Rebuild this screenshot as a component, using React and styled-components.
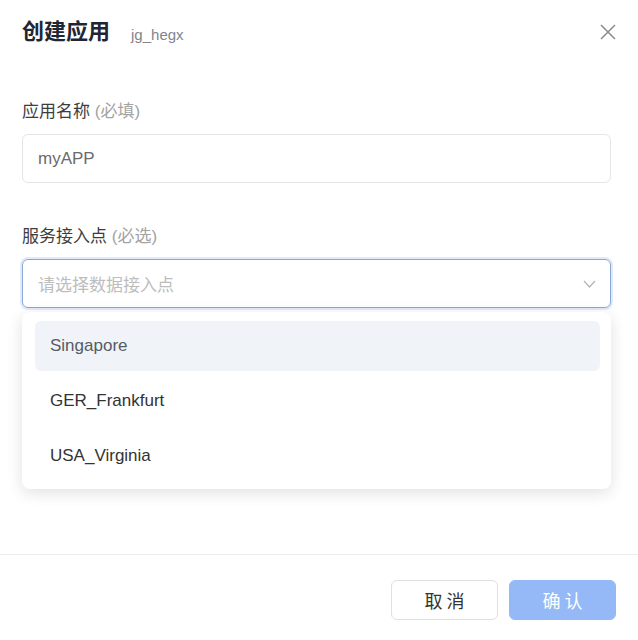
import React from "react";
import styled, { createGlobalStyle } from "styled-components";

const GlobalStyle = createGlobalStyle`
  html, body {
    margin: 0;
    padding: 0;
    background: #ffffff;
  }
  body {
    font-family: "Liberation Sans", "Noto Sans CJK SC", sans-serif;
    color: #333;
  }
`;

const Modal = styled.div`
  height: 640px;
  display: flex;
  flex-direction: column;
  box-sizing: border-box;
`;

const Header = styled.div`
  height: 64px;
  padding: 0 22px;
  display: flex;
  align-items: center;
  box-sizing: border-box;
`;

const Title = styled.h2`
  margin: 0;
  font-size: 22px;
  font-weight: 700;
  color: #1f2633;
  line-height: 1;
`;

const SubTitle = styled.span`
  margin-left: 21px;
  margin-top: 4px;
  font-size: 15px;
  font-weight: 400;
  color: #80858f;
`;

const CloseButton = styled.button`
  margin-left: auto;
  margin-right: -3px;
  width: 22px;
  height: 22px;
  padding: 0;
  border: none;
  background: none;
  display: flex;
  align-items: center;
  justify-content: center;
  cursor: pointer;
`;

const Body = styled.div`
  flex: 1;
  padding: 36px 27px 0 22px;
  display: flex;
  flex-direction: column;
  gap: 42px;
`;

const Field = styled.div`
  display: flex;
  flex-direction: column;
  gap: 10px;
  position: relative;
`;

const Label = styled.label`
  font-size: 17px;
  line-height: 24px;
  color: #3d3d3d;

  & > span {
    color: #a3a3a3;
  }
`;

const Input = styled.div`
  height: 49px;
  box-sizing: border-box;
  border: 1px solid #e3e5e8;
  border-radius: 6px;
  padding: 0 15px;
  display: flex;
  align-items: center;
  font-size: 17px;
  color: #6b6b6b;
`;

const Select = styled(Input)`
  border-color: #8ba6d4;
  box-shadow: 0 0 0 2px #e1eaf8;
  color: #bdbdbd;
  justify-content: space-between;
  padding-right: 14px;
`;

const Dropdown = styled.ul`
  position: absolute;
  top: calc(100% + 4px);
  left: 0;
  right: 0;
  margin: 0;
  padding: 9px 11px 8px 13px;
  list-style: none;
  background: #fff;
  border-radius: 8px;
  box-shadow: 0 4px 16px rgba(0, 0, 0, 0.12);
  display: flex;
  flex-direction: column;
  gap: 5px;
`;

const Option = styled.li`
  height: 50px;
  display: flex;
  align-items: center;
  padding: 0 15px;
  border-radius: 6px;
  font-size: 17px;
  color: ${({ $active }) => ($active ? "#555b66" : "#333")};
  background: ${({ $active }) => ($active ? "#f0f3f8" : "transparent")};
`;

const Footer = styled.div`
  height: 86px;
  border-top: 1px solid #ececec;
  padding: 25px 22px 0;
  box-sizing: border-box;
  display: flex;
  justify-content: flex-end;
  align-items: flex-start;
  gap: 11px;
`;

const Button = styled.button`
  width: 107px;
  height: 40px;
  border-radius: 6px;
  font-family: "Liberation Sans", "Noto Sans CJK SC", sans-serif;
  font-size: 18px;
  letter-spacing: 4px;
  text-indent: 4px;
  cursor: pointer;
  border: 1px solid ${({ $primary }) => ($primary ? "#94b9f6" : "#e0e0e0")};
  background: ${({ $primary }) => ($primary ? "#94b9f6" : "#fff")};
  color: ${({ $primary }) => ($primary ? "#fff" : "#333")};
`;

const CloseIcon = () => (
  <svg width="16" height="16" viewBox="0 0 16 16">
    <path d="M1 1 L15 15 M15 1 L1 15" stroke="#8a8a8a" strokeWidth="1.5" fill="none" />
  </svg>
);

const Chevron = () => (
  <svg width="13" height="8" viewBox="0 0 13 8">
    <path d="M1 1 L6.5 7 L12 1" stroke="#b5b5b5" strokeWidth="1.2" fill="none" />
  </svg>
);

const regions = ["Singapore", "GER_Frankfurt", "USA_Virginia"];

const App = () => {
  return (
    <>
      <GlobalStyle />
      <Modal>
        <Header>
          <Title>创建应用</Title>
          <SubTitle>jg_hegx</SubTitle>
          <CloseButton>
            <CloseIcon />
          </CloseButton>
        </Header>
        <Body>
          <Field>
            <Label>
              应用名称 <span>(必填)</span>
            </Label>
            <Input>myAPP</Input>
          </Field>
          <Field>
            <Label>
              服务接入点 <span>(必选)</span>
            </Label>
            <Select>
              请选择数据接入点
              <Chevron />
            </Select>
            <Dropdown>
              {regions.map((r, i) => (
                <Option key={r} $active={i === 0}>
                  {r}
                </Option>
              ))}
            </Dropdown>
          </Field>
        </Body>
        <Footer>
          <Button>取消</Button>
          <Button $primary>确认</Button>
        </Footer>
      </Modal>
    </>
  );
};

export default App;
